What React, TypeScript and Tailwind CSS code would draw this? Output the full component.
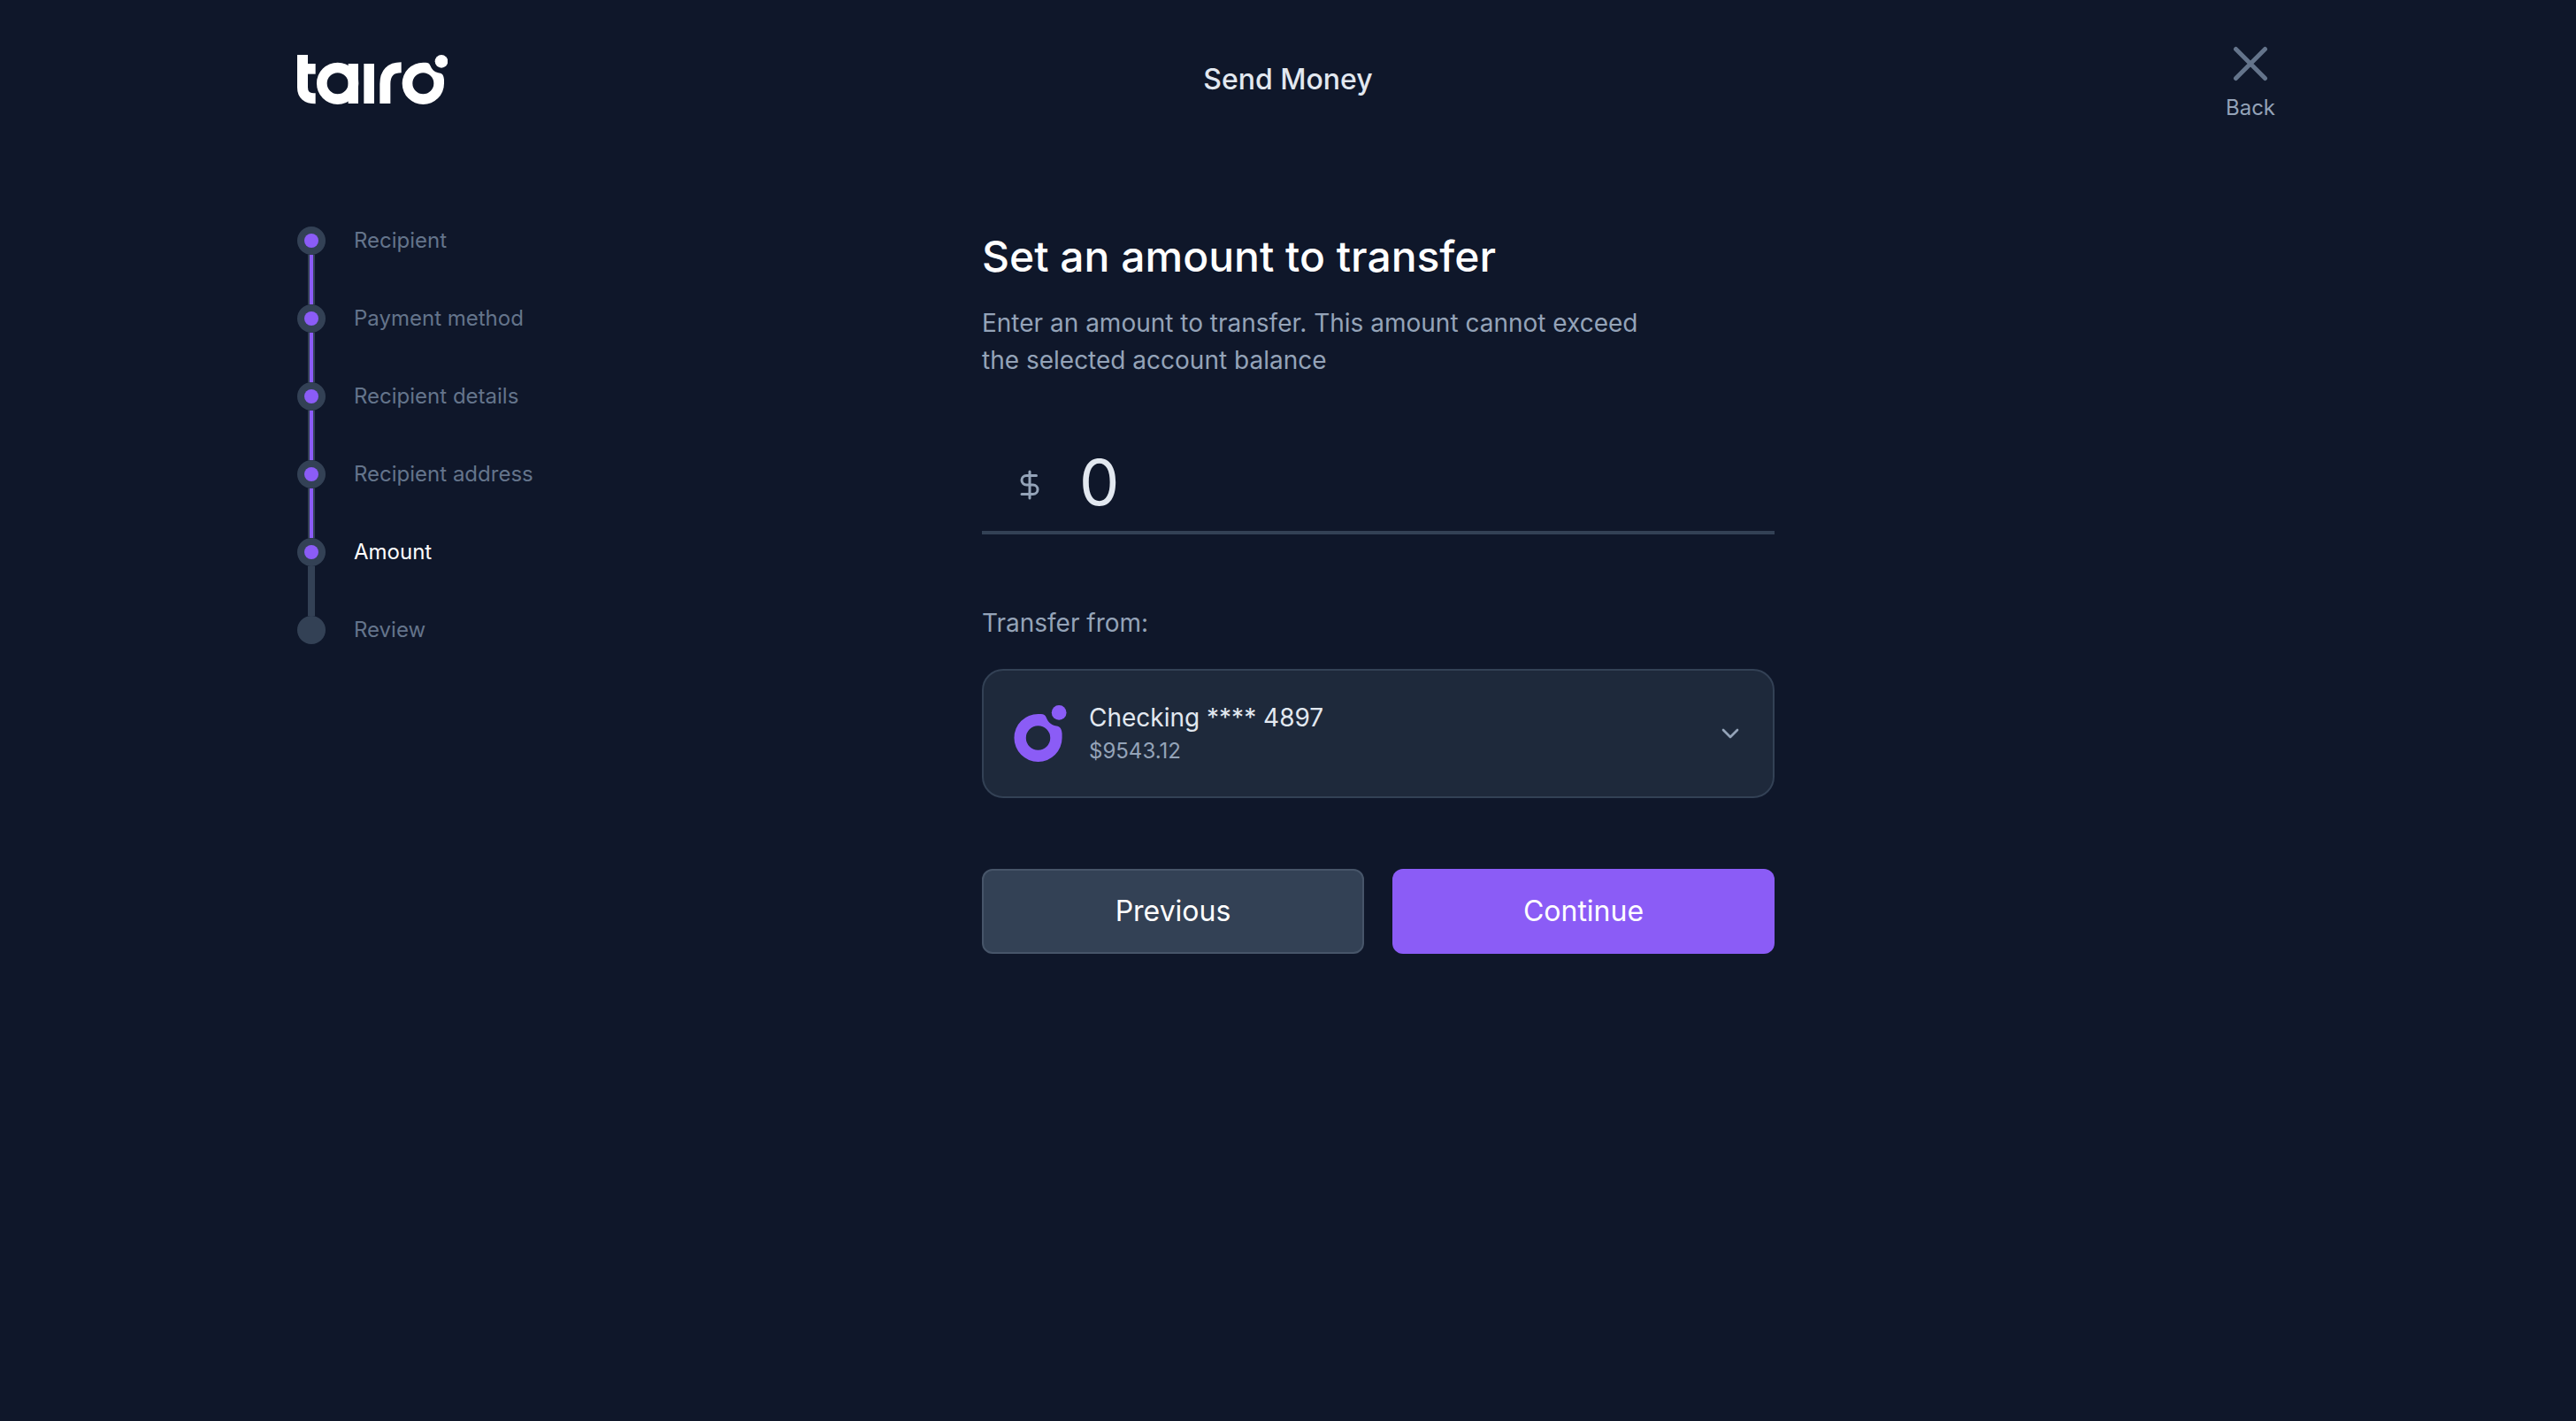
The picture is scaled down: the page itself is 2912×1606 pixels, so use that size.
import { useState } from "react";
import { ChevronDown, DollarSign } from "lucide-react";

const steps = [
  "Recipient",
  "Payment method",
  "Recipient details",
  "Recipient address",
  "Amount",
  "Review",
];
const current = 4;

function RingMark() {
  return (
    <>
      <path
        fillRule="evenodd"
        d="M475 92 H484 C492 92 496 95 499 102 C504 115 513 124 526 127 C536 129 544 129 546 150 V163 A71 71 0 1 1 475 92 Z M475 127 A36 36 0 1 0 475 199 A36 36 0 1 0 475 127 Z"
      />
      <circle cx="537" cy="88" r="22" />
    </>
  );
}

function Logo() {
  return (
    <svg viewBox="48 66 510 168" className="h-14 w-[170px] text-white" fill="currentColor" role="img" aria-label="tairo">
      <g fill="none" stroke="currentColor" strokeWidth="36">
        <path d="M66 66 V176 Q66 214 110 214" />
        <path d="M84 113.500 H110" strokeWidth="35" />
        <circle cx="185" cy="163" r="53.500" strokeWidth="35" />
        <path d="M346 231 V165 Q346 109 401 109" />
      </g>
      <rect x="221" y="96" width="34" height="135" />
      <rect x="274" y="96" width="35" height="135" />
      <RingMark />
    </svg>
  );
}

export default function App() {
  const [amount, setAmount] = useState("0");
  return (
    <div className="min-h-screen bg-[#0f172a] font-[Inter,sans-serif] text-[#e2e8f0]">
      <div className="mx-auto max-w-[2560px] px-40">
        <header className="grid h-[180px] grid-cols-3 items-center">
          <a href="#home" className="justify-self-start">
            <Logo />
          </a>
          <h2 className="text-center text-[32px] leading-10 font-medium">Send Money</h2>
          <a href="#back" className="flex w-16 flex-col items-center gap-3 justify-self-end pt-3 text-[#94a3b8]">
            <svg viewBox="0 0 40 40" className="size-10 text-[#64748b]" fill="none" stroke="currentColor" strokeWidth="5" strokeLinecap="round" aria-hidden="true">
              <path d="M3.500 3.500 36.500 36.500 M36.500 3.500 3.500 36.500" />
            </svg>
            <span className="text-2xl leading-9">Back</span>
          </a>
        </header>

        <div className="grid grid-cols-[minmax(0,774fr)_minmax(0,896fr)_minmax(0,570fr)] pt-[76px]">
          <nav aria-label="Progress">
            <ol className="flex flex-col gap-14">
              {steps.map((step, i) => (
                <li key={step} className="relative flex h-8 items-center gap-8">
                  {i < steps.length - 1 && (
                    <span className="absolute top-8 left-3 flex h-14 w-2 justify-center bg-[#334155]">
                      {i < current && <span className="h-full w-1 bg-[#8b5cf6]" />}
                    </span>
                  )}
                  <span className="flex size-8 items-center justify-center rounded-full bg-[#334155]">
                    {i <= current && <span className="size-4 rounded-full bg-[#8b5cf6]" />}
                  </span>
                  <a
                    href="#step"
                    aria-current={i === current ? "step" : undefined}
                    className={i === current ? "text-2xl text-white" : "text-2xl text-[#64748b]"}
                  >
                    {step}
                  </a>
                </li>
              ))}
            </ol>
          </nav>

          <main>
            <h1 className="pt-1 text-5xl leading-[60px] font-medium text-white">Set an amount to transfer</h1>
            <p className="mt-6 max-w-[768px] text-[28px] leading-[42px] text-[#94a3b8]">
              Enter an amount to transfer. This amount cannot exceed the selected account balance
            </p>

            <div className="mt-16 flex h-28 border-b-4 border-[#334155] pl-9">
              <DollarSign className="mt-1 size-9 self-center text-[#94a3b8]" aria-hidden="true" />
              <input
                type="text"
                aria-label="Amount"
                value={amount}
                onChange={(e) => setAmount(e.target.value)}
                className="ml-[38px] h-[104px] w-full min-w-0 flex-1 bg-transparent text-7xl text-[#e2e8f0] outline-none"
              />
            </div>

            <p className="mt-20 text-[28px] leading-10 text-[#94a3b8]">Transfer from:</p>
            <button
              type="button"
              aria-haspopup="listbox"
              className="mt-8 flex h-[146px] w-full items-center rounded-3xl border-2 border-[#334155] bg-[#1e293b] pr-8 pl-[34px] text-left"
            >
              <svg viewBox="404 66 155 168" className="h-16 w-[60px] text-[#8b5cf6]" fill="currentColor" aria-hidden="true">
                <RingMark />
              </svg>
              <span className="ml-[25px] flex-1">
                <span className="block text-[28px] leading-10">Checking **** 4897</span>
                <span className="block text-2xl leading-9 text-[#94a3b8]">$9543.12</span>
              </span>
              <ChevronDown className="size-8 text-[#94a3b8]" aria-hidden="true" />
            </button>

            <div className="mt-20 grid grid-cols-2 gap-8 text-[32px] text-white">
              <button type="button" className="h-24 rounded-xl border-2 border-[#475569] bg-[#334155]">
                Previous
              </button>
              <button type="button" className="h-24 rounded-xl bg-[#8b5cf6]">
                Continue
              </button>
            </div>
          </main>
        </div>
      </div>
    </div>
  );
}
